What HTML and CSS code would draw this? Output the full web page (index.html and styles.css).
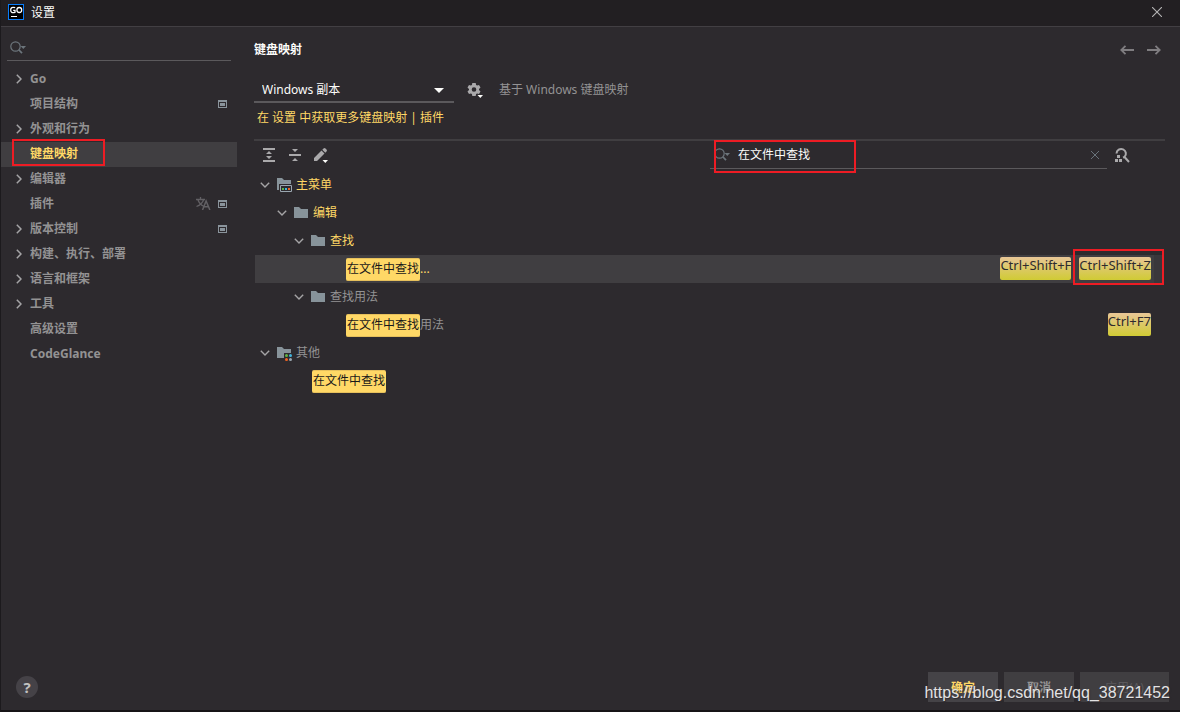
FILE: index.html
```html
<!DOCTYPE html>
<html lang="zh-CN">
<head>
<meta charset="utf-8">
<title>设置</title>
<link rel="stylesheet" href="styles.css">
</head>
<body>
<svg class="defs" aria-hidden="true">
  <symbol id="search" viewBox="0 0 17 14"><circle cx="5.5" cy="5.5" r="4.7" fill="none" stroke="currentColor" stroke-width="1.200"/><path d="M9 9l3 3.2" stroke="currentColor" stroke-width="1.8"/><path d="M10.500 5h5.500l-2.700 3z" fill="currentColor"/></symbol>
  <symbol id="right" viewBox="0 0 6 10"><path d="M.8.8L5 5 .8 9.200" fill="none" stroke="currentColor" stroke-width="1.5"/></symbol>
  <symbol id="down" viewBox="0 0 10 6"><path d="M.8.8L5 5 9.200.8" fill="none" stroke="currentColor" stroke-width="1.4"/></symbol>
  <symbol id="project" viewBox="0 0 9 8"><path d="M0 0h9v8H0zM1 2v5h7V2z" fill="#8a949c" fill-rule="evenodd"/><path d="M2 3h5v3H2z" fill="#8a949c"/></symbol>
  <symbol id="folder" viewBox="0 0 16 16"><path d="M1 2h5l2 2h7v9H1z" fill="#87939a"/></symbol>
</svg>
<div class="window">
  <header class="titlebar">
    <svg class="logo" viewBox="0 0 16 16"><rect x=".5" y=".5" width="15" height="15" fill="#000" stroke="#087cfa"/><path d="M7.200 3.700Q2.700 2.400 2.700 6T7 8.300V6.300H5.200" fill="none" stroke="#fff" stroke-width="1.300"/><ellipse cx="11.300" cy="6" rx="2.400" ry="2.500" fill="none" stroke="#fff" stroke-width="1.300"/><path d="M3 12.500h6" stroke="#fff"/></svg>
    <h1 class="title">设置</h1>
    <button class="icon-btn close" aria-label="关闭"><svg viewBox="0 0 10 10" width="10" height="10"><path d="M0 0l10 10M10 0L0 10" stroke="#b5b4b5" stroke-width="1.100"/></svg></button>
  </header>
  <div class="body">
    <aside class="sidebar">
      <label class="side-search"><svg class="search-icon"><use href="#search"/></svg><input type="text" aria-label="搜索设置"></label>
      <nav class="nav">
        <a href="#" class="nav-item"><svg class="chev"><use href="#right"/></svg><span class="name">Go</span></a>
        <a href="#" class="nav-item"><span class="name leaf">项目结构</span><svg class="proj"><use href="#project"/></svg></a>
        <a href="#" class="nav-item"><svg class="chev"><use href="#right"/></svg><span class="name">外观和行为</span></a>
        <a href="#" class="nav-item selected"><span class="name leaf">键盘映射</span><i class="frame frame-nav"></i></a>
        <a href="#" class="nav-item"><svg class="chev"><use href="#right"/></svg><span class="name">编辑器</span></a>
        <a href="#" class="nav-item"><span class="name leaf">插件</span><svg class="lang" viewBox="0 0 15 13"><path d="M0 2.500h9M4.500 0v2.500M2 3c1 3 3 5 6 6.500M7.500 3c-1 3-3 5-7 6.500" fill="none" stroke="#626064" stroke-width="1.300"/><path d="M6.500 13l3.600-9 3.800 9M8 9.800h4.500" fill="none" stroke="#626064" stroke-width="1.500"/></svg><svg class="proj"><use href="#project"/></svg></a>
        <a href="#" class="nav-item"><svg class="chev"><use href="#right"/></svg><span class="name">版本控制</span><svg class="proj"><use href="#project"/></svg></a>
        <a href="#" class="nav-item"><svg class="chev"><use href="#right"/></svg><span class="name">构建、执行、部署</span></a>
        <a href="#" class="nav-item"><svg class="chev"><use href="#right"/></svg><span class="name">语言和框架</span></a>
        <a href="#" class="nav-item"><svg class="chev"><use href="#right"/></svg><span class="name">工具</span></a>
        <a href="#" class="nav-item"><span class="name leaf">高级设置</span></a>
        <a href="#" class="nav-item"><span class="name leaf">CodeGlance</span></a>
      </nav>
    </aside>
    <main class="main">
      <div class="heading">
        <h2 class="page-title">键盘映射</h2>
        <button class="icon-btn" aria-label="后退"><svg viewBox="0 0 14 10" width="14" height="10"><path d="M14 5H1.500M5.500.8L1.300 5l4.200 4.200" fill="none" stroke="#7f7d80" stroke-width="1.800"/></svg></button>
        <button class="icon-btn" aria-label="前进"><svg viewBox="0 0 14 10" width="14" height="10"><path d="M0 5h12.500M8.500.8L12.700 5 8.500 9.200" fill="none" stroke="#7f7d80" stroke-width="1.800"/></svg></button>
      </div>
      <div class="scheme">
        <div class="combo"><select aria-label="键盘映射方案"><option>Windows 副本</option></select><svg class="combo-arrow" viewBox="0 0 10 5"><path d="M0 0h10L5 5z" fill="#fcfcfa"/></svg></div>
        <button class="icon-btn gear" aria-label="方案操作"><svg viewBox="0 0 16 16" width="16" height="16"><path d="M5.300 1h3.400l.4 1.900 1 .6 1.900-.6 1.500 2.700L12 7v1l1.500 1.400-1.500 2.700-1.900-.6-1 .6-.4 1.900H5.300l-.4-1.900-1-.6-1.900.6L.5 9.400 2 8V7L.5 5.600 2 2.900l1.900.6 1-.6zM7 5.200a2.300 2.300 0 100 4.600 2.300 2.300 0 000-4.600z" fill="#aaa9ab" fill-rule="evenodd"/><path d="M9 12h7l-3.500 4z" fill="#2d2a2e"/><path d="M10.500 13H16l-2.700 3z" fill="#fcfcfa"/></svg></button>
        <span class="based">基于 Windows 键盘映射</span>
      </div>
      <a href="#" class="more">在 设置 中获取更多键盘映射 | 插件</a>
      <div class="toolbar">
        <button class="icon-btn" aria-label="全部展开"><svg viewBox="0 0 16 16" width="16" height="16"><path d="M2 1h12v2H2zM2 13h12v2H2zM5 7l3-3 3 3zM5 9h6l-3 3z" fill="#aaa9ab"/></svg></button>
        <button class="icon-btn" aria-label="全部折叠"><svg viewBox="0 0 16 16" width="16" height="16"><path d="M2 7h12v2H2zM5 2h6L8 5zM5 14l3-3 3 3z" fill="#aaa9ab"/></svg></button>
        <button class="icon-btn" aria-label="编辑快捷键"><svg viewBox="0 0 16 16" width="16" height="16"><path d="M1 11l7.500-7.500 3 3L4 14H1zM9.300 2.700l1.200-1.200q1-1 2 0l1 1q1 1 0 2l-1.200 1.200z" fill="#aaa9ab"/><path d="M9.500 13H15l-2.700 3z" fill="#fcfcfa"/></svg></button>
        <label class="find"><svg class="search-icon"><use href="#search"/></svg><input type="text" aria-label="按操作名搜索" value="在文件中查找"><button class="clear" aria-label="清除"><svg viewBox="0 0 8 8" width="8" height="8"><path d="M0 0l8 8M8 0L0 8" stroke="#68727a"/></svg></button><i class="frame frame-find"></i></label>
        <button class="icon-btn by-key" aria-label="按快捷键查找"><svg viewBox="0 0 16 16" width="16" height="16"><path d="M2.500 6.500a4.700 4.700 0 118 3.500L9 10.500M10.500 10l4.500 5" fill="none" stroke="#aaa9ab" stroke-width="2"/><path d="M3 8h3v3H3zM1 12h3v3H1zM5 12h3v3H5z" fill="#aaa9ab"/></svg></button>
      </div>
      <div class="tree">
        <div class="row l0 hit"><svg class="tchev"><use href="#down"/></svg><svg class="ticon" viewBox="0 0 16 16"><path d="M1 1h5l2 2h7v4H3v6H1z" fill="#87939a"/><path d="M4.500 8.500h11v6h-11z" fill="#2d2a2e" stroke="#9aa7b0"/><path d="M6 11h2v2H6z" fill="#62b543"/><path d="M9 11h2v2H9z" fill="#40b6e0"/><path d="M12 11h2v2h-2z" fill="#f26522"/></svg><span>主菜单</span></div>
        <div class="row l1 hit"><svg class="tchev"><use href="#down"/></svg><svg class="ticon"><use href="#folder"/></svg><span>编辑</span></div>
        <div class="row l2 hit"><svg class="tchev"><use href="#down"/></svg><svg class="ticon"><use href="#folder"/></svg><span>查找</span></div>
        <div class="row leaf3 hit current"><mark>在文件中查找</mark><span>...</span><div class="keys"><kbd>Ctrl+Shift+F</kbd><kbd>Ctrl+Shift+Z<i class="frame frame-key"></i></kbd></div></div>
        <div class="row l2"><svg class="tchev"><use href="#down"/></svg><svg class="ticon"><use href="#folder"/></svg><span>查找用法</span></div>
        <div class="row leaf3"><mark>在文件中查找</mark><span>用法</span><div class="keys"><kbd>Ctrl+F7</kbd></div></div>
        <div class="row l0"><svg class="tchev"><use href="#down"/></svg><svg class="ticon" viewBox="0 0 16 16"><path d="M1 2h5l2 2h7v4H8v5H1z" fill="#87939a"/><circle cx="10.500" cy="10.500" r="1.500" fill="#62b543"/><circle cx="14.500" cy="10.500" r="1.500" fill="#40b6e0"/><circle cx="10.500" cy="14.500" r="1.500" fill="#f26522"/><circle cx="14.500" cy="14.500" r="1.500" fill="#9aa7b0"/></svg><span>其他</span></div>
        <div class="row leaf1"><mark>在文件中查找</mark></div>
      </div>
    </main>
  </div>
  <footer class="footer">
    <button class="help" aria-label="帮助">?</button>
    <button class="btn primary">确定</button>
    <button class="btn">取消</button>
    <button class="btn wide" disabled>应用(A)</button>
    <span class="watermark">https://blog.csdn.net/qq_38721452</span>
  </footer>
</div>
</body>
</html>
```
FILE: styles.css
```css
* { box-sizing: border-box; }

body {
  margin: 0;
  background: #2d2a2e;
  color: #939293;
  font: 12px/16px "Noto Sans", "Noto Sans CJK SC", sans-serif;
}

button, input, select { font: inherit; color: inherit; border: 0; padding: 0; margin: 0; background: none; outline: 0; }
a { color: inherit; text-decoration: none; }
svg { display: block; flex: none; }
.defs { position: absolute; width: 0; height: 0; }

.window {
  display: flex;
  flex-direction: column;
  min-height: 100vh;
  border-left: 1px solid #1c1a1d;
  border-bottom: 2px solid #161416;
}

.titlebar {
  display: flex;
  align-items: center;
  height: 27px;
  padding: 0 18px 2px 7px;
  background: #221f22;
  border-bottom: 1px solid #423f43;
}
.logo { width: 16px; height: 16px; }
.title { margin: 0 auto 0 7px; padding-top: 2px; font-size: 12px; font-weight: 400; color: #fcfcfa; }
.icon-btn { display: block; flex: none; }

.body { display: flex; flex: 1; }

.sidebar { width: 236px; flex: none; padding-top: 8px; }
.side-search {
  display: flex;
  align-items: center;
  height: 26px;
  margin: 0 6px;
  padding-left: 3px;
  border-bottom: 1px solid #5b595c;
}
.side-search input { flex: 1; min-width: 0; }
.search-icon { width: 17px; height: 14px; color: #6c757c; }

.nav { padding-top: 6px; }
.nav-item {
  position: relative;
  display: flex;
  align-items: center;
  height: 25px;
  padding: 0 10px 2px 15px;
  font-weight: 700;
}
.nav-item.selected { background: #403e41; color: #ffd866; }
.chev { width: 6px; height: 10px; margin-right: 8px; color: #a5a4a6; }
.name { flex: 1; }
.name.leaf { padding-left: 14px; }
.proj { width: 9px; height: 8px; }
.lang { width: 15px; height: 13px; margin-right: 7px; }

.frame { position: absolute; border: 2px solid #ed1c24; pointer-events: none; }
.frame-nav { left: 11px; top: -3px; width: 93px; height: 27px; }
.frame-find { left: 4px; top: -1px; width: 142px; height: 33px; }
.frame-key { left: -6px; right: -13px; top: -8px; bottom: -5px; }

.main { flex: 1; min-width: 0; padding: 15px 15px 0 17px; }
.heading { display: flex; align-items: center; gap: 13px; padding-right: 4px; }
.page-title { flex: 1; margin: 0; font-size: 12px; font-weight: 700; color: #fcfcfa; }

.scheme { display: flex; align-items: center; margin-top: 19px; height: 26px; }
.combo { position: relative; width: 200px; height: 26px; border-bottom: 2px solid #5b595c; }
.combo select { width: 100%; height: 24px; padding: 2px 0 0 8px; appearance: none; color: #fcfcfa; }
.combo-arrow { position: absolute; right: 10px; top: 11px; width: 10px; height: 5px; pointer-events: none; }
.gear { margin-left: 13px; }
.based { margin-left: 16px; }
.more { display: block; width: max-content; margin: 7px 0 13px 3px; color: #ffd866; }

.toolbar {
  display: flex;
  align-items: center;
  gap: 10px;
  height: 32px;
  padding: 0 35px 2px 7px;
  border-top: 2px solid #403e41;
}
.find {
  position: relative;
  display: flex;
  align-items: center;
  flex: 0 1 397px;
  height: 28px;
  margin-left: auto;
  padding: 0 8px 0 4px;
  border-bottom: 1px solid #5b595c;
}
.find input { flex: 1; min-width: 0; margin-left: 7px; color: #fcfcfa; }
.by-key { margin-left: -3px; }

.tree { margin: 0 2px 0 1px; }
.row { display: flex; align-items: center; height: 28px; padding-right: 12px; }
.row.hit { color: #ffd866; }
.row.current { background: linear-gradient(to left, #3a373b 9px, #403e41 9px); }
.l0 { padding-left: 5px; }
.l1 { padding-left: 22px; }
.l2 { padding-left: 39px; }
.leaf1 { padding-left: 57px; }
.leaf3 { padding-left: 91px; }
.tchev { width: 10px; height: 6px; color: #a5a4a6; }
.ticon { width: 16px; height: 16px; margin: 0 4px 0 6px; }
mark {
  height: 23px;
  padding: 0 1px;
  line-height: 20px;
  border: 1px solid #e6c05c;
  border-width: 1px 0;
  border-radius: 2px;
  background: #ffd866;
  color: #19181a;
}
.keys { display: flex; gap: 8px; margin: 0 0 2px auto; }
kbd {
  position: relative;
  height: 23px;
  border-radius: 2px;
  background: linear-gradient(#e8c697, #d0cb34);
  color: #2d2a2e;
  font: 13px/16px "Noto Sans", sans-serif;
}

.footer { position: relative; display: flex; gap: 6px; padding: 0 11px 8px 15px; }
.help {
  width: 22px;
  height: 22px;
  margin: 4px auto 0 0;
  border-radius: 50%;
  background: #454247;
  color: #c1c0c0;
  font-size: 15px;
  font-weight: 700;
  line-height: 22px;
}
.btn { width: 70px; height: 30px; padding-top: 2px; background: #403e41; font-weight: 700; }
.btn.primary { background: #454347; color: #ffd866; }
.btn.wide { width: 89px; color: #5b595c; font-weight: 400; }
.watermark {
  position: absolute;
  right: 10px;
  bottom: 7px;
  color: #e3e2e3;
  font: 16px/20px "Liberation Sans", sans-serif;
  text-shadow: 1px 1px 1px #2d2a2e;
}
```
